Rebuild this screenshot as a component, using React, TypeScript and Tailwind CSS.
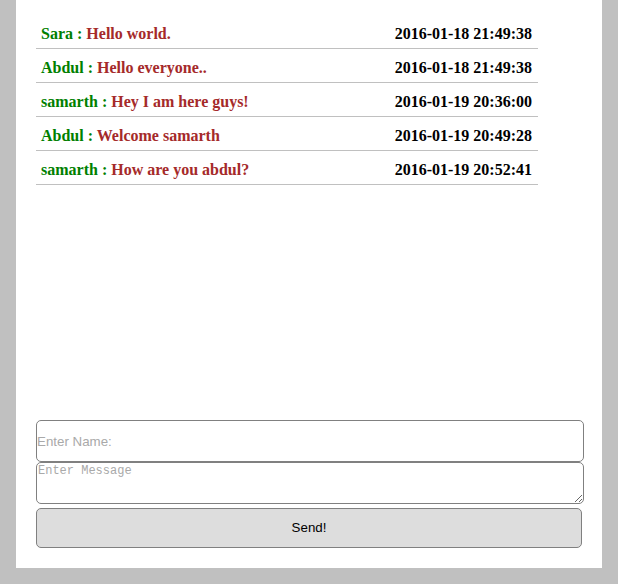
import React from "react";

const messages = [
  { name: "Sara", text: "Hello world.", time: "2016-01-18 21:49:38" },
  { name: "Abdul", text: "Hello everyone..", time: "2016-01-18 21:49:38" },
  { name: "samarth", text: "Hey I am here guys!", time: "2016-01-19 20:36:00" },
  { name: "Abdul", text: "Welcome samarth", time: "2016-01-19 20:49:28" },
  { name: "samarth", text: "How are you abdul?", time: "2016-01-19 20:52:41" },
];

const App: React.FC = () => {
  return (
    <div className="w-[618px] h-[584px] bg-[#c0c0c0]">
      <div className="ml-[16px] w-[586px] h-[568px] bg-white flex flex-col pl-[20px] pb-[20px]">
        <div className="mt-[15px] w-[502px] font-['Liberation_Serif',serif] font-bold text-[16px] leading-[18px]">
          {messages.map((m, index) => (
            <div
              key={index}
              className="h-[34px] border-b border-[#c0c0c0] flex justify-between pt-[10px] pl-[5px] pr-[6px]"
            >
              <p>
                <span className="text-[#008000]">{m.name} : </span>
                <span className="text-[#a52a2a]">{m.text}</span>
              </p>
              <p className="text-black">{m.time}</p>
            </div>
          ))}
        </div>
        <div className="mt-auto w-[548px] flex flex-col">
          <input
            className="h-[42px] w-[548px] border border-[#808080] rounded-[5px] px-0 text-[13.33px] font-['Liberation_Sans',sans-serif] placeholder:text-[#a9a9a9] outline-none"
            placeholder="Enter Name:"
          />
          <textarea
            className="h-[42px] w-[548px] border border-[#808080] rounded-[5px] p-[1px] text-[12px] leading-[15px] font-['Liberation_Mono',monospace] placeholder:text-[#a9a9a9] outline-none"
            placeholder="Enter Message"
          />
          <button className="mt-[4px] h-[40px] w-[546px] border border-[#808080] rounded-[5px] bg-[#dddddd] text-[13.33px] text-black font-['Liberation_Sans',sans-serif]">
            Send!
          </button>
        </div>
      </div>
    </div>
  );
};

export default App;
